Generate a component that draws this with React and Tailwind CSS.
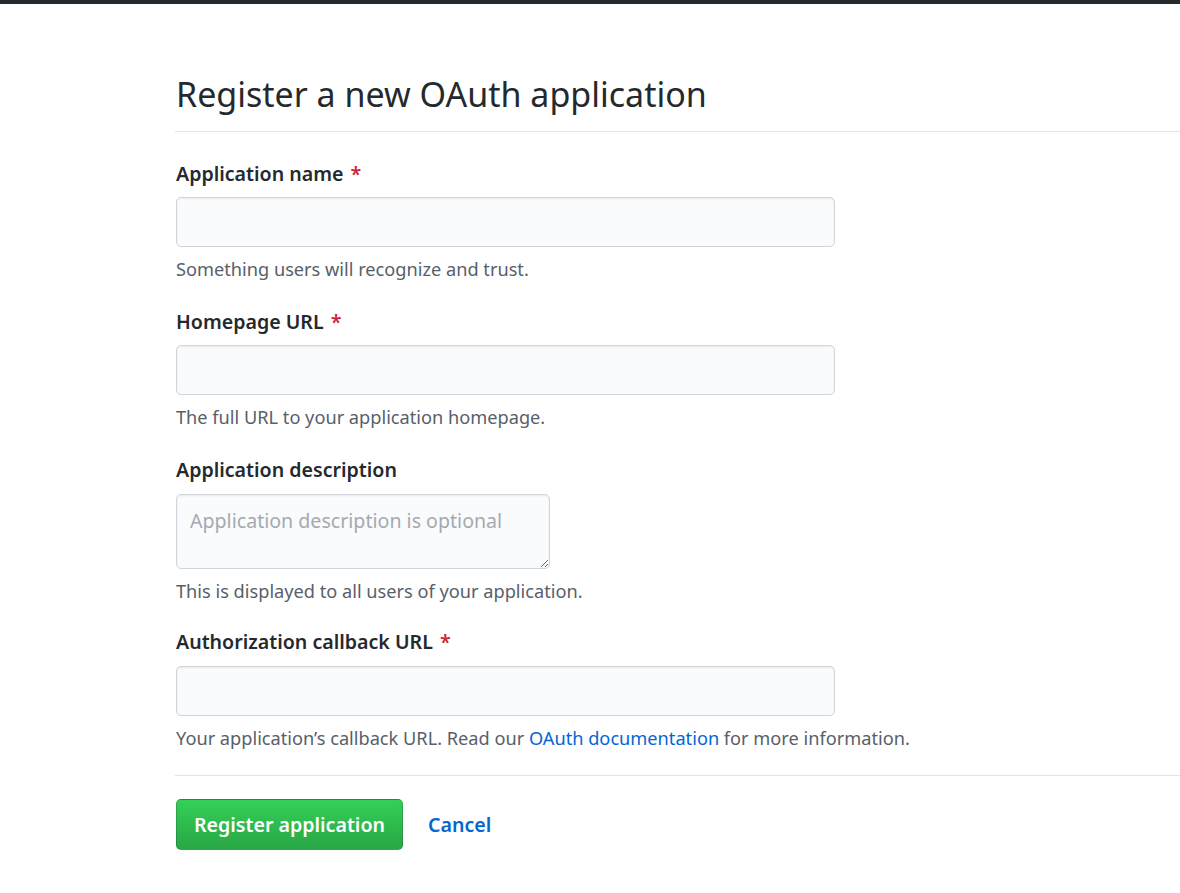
export default function App() {
  const font = { fontFamily: '"Noto Sans", "Open Sans", sans-serif' };
  const Label = ({ children, req }) => (
    <div className="text-[19.6px] font-semibold text-[#24292e] leading-[24px]">
      {children}
      {req && <span className="text-[#cb2431] ml-[7px]">*</span>}
    </div>
  );
  const Note = ({ children }) => (
    <div className="text-[18.2px] text-[#586069] leading-[24px]">{children}</div>
  );
  const inputCls =
    "block w-[659px] h-[50px] bg-[#fafbfc] border border-[#d1d5da] rounded-[5px] shadow-[inset_0_1px_2px_rgba(27,31,35,0.075)] px-3 outline-none";
  return (
    <div className="min-h-[893px] bg-white" style={font}>
      <div className="h-[4px] bg-[#24292e]" />
      <div className="pl-[175px]">
        <div className="pt-[68px] pb-[15px] border-b border-[#e1e4e8]">
          <h1 className="text-[34px] font-normal text-[#24292e] leading-[44px] pl-[1px]">
            Register a new OAuth application
          </h1>
        </div>
        <div className="pl-[1px] w-[1005px]">
          <div className="pt-[30px]">
            <Label req>Application name</Label>
            <input className={inputCls + " mt-[11px]"} />
            <div className="mt-[10px]">
              <Note>Something users will recognize and trust.</Note>
            </div>
          </div>
          <div className="pt-[29px]">
            <Label req>Homepage URL</Label>
            <input className={inputCls + " mt-[11px]"} />
            <div className="mt-[10px]">
              <Note>The full URL to your application homepage.</Note>
            </div>
          </div>
          <div className="pt-[29px]">
            <Label>Application description</Label>
            <textarea
              className="block w-[374px] h-[75px] mt-[12px] bg-[#fafbfc] border border-[#d1d5da] rounded-[5px] shadow-[inset_0_1px_2px_rgba(27,31,35,0.075)] px-[13px] pt-[14px] pb-[10px] text-[19.6px] text-[#24292e] placeholder:text-[#a3aab1] outline-none leading-[24px]"
              placeholder="Application description is optional"
            />
            <div className="mt-[10px]">
              <Note>This is displayed to all users of your application.</Note>
            </div>
          </div>
          <div className="pt-[27px]">
            <Label req>Authorization callback URL</Label>
            <input className={inputCls + " mt-[12px]"} />
            <div className="mt-[10px]">
              <Note>
                Your application’s callback URL. Read our{" "}
                <a href="#" className="text-[#0366d6]">OAuth documentation</a>{" "}
                for more information.
              </Note>
            </div>
          </div>
        </div>
        <div className="mt-[25px] border-t border-[#e1e4e8] pt-[23px] flex items-center pl-[1px]">
          <button className="h-[51px] w-[227px] rounded-[5px] border border-[rgba(27,31,35,0.2)] bg-gradient-to-b from-[#34d058] to-[#28a745] text-white text-[19.6px] font-semibold">
            Register application
          </button>
          <a href="#" className="ml-[25px] text-[#0366d6] text-[19.6px] font-semibold">Cancel</a>
        </div>
      </div>
    </div>
  );
}
